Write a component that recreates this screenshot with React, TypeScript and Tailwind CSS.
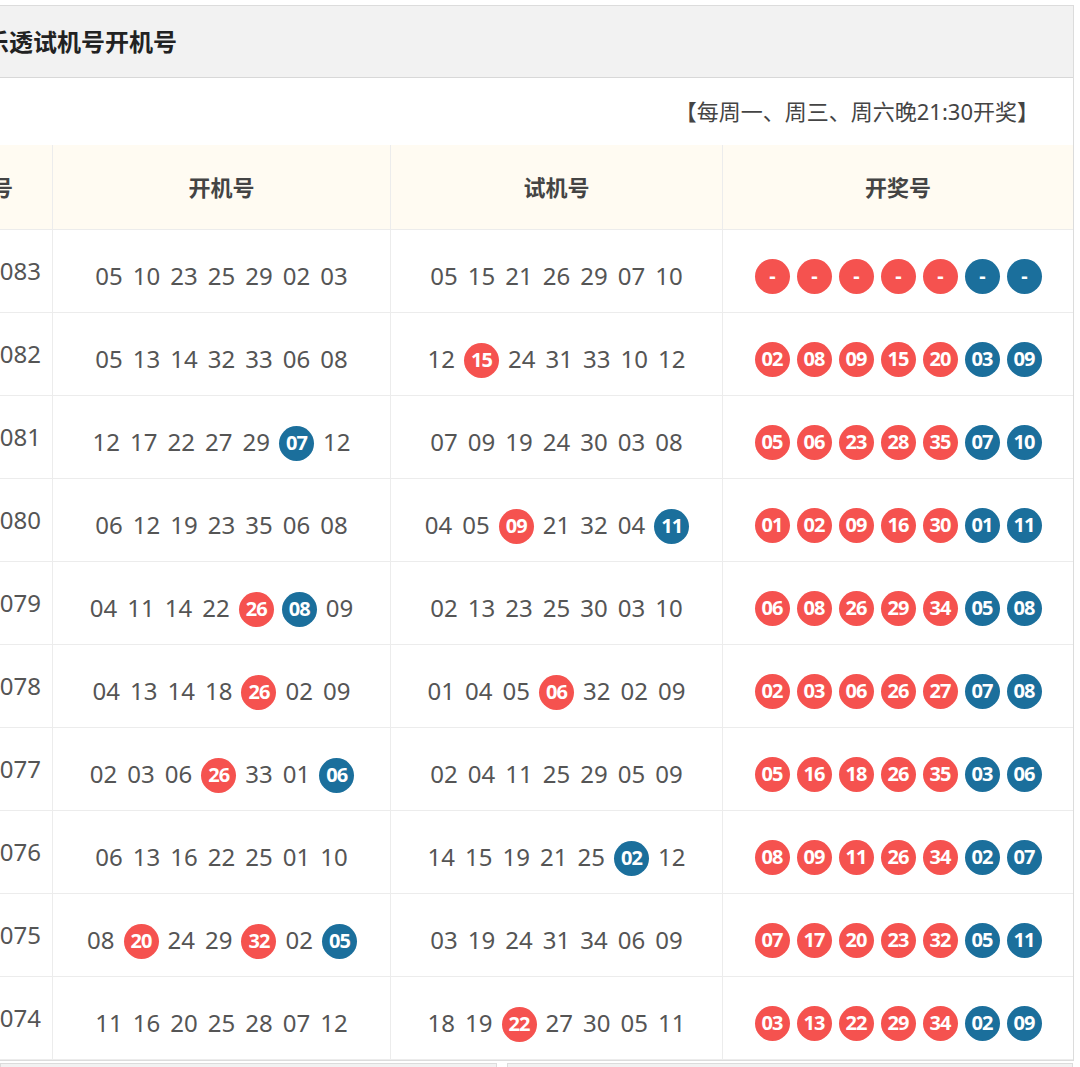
const rows: [string, string, string, string][] = [
  ["2025083", "05 10 23 25 29 02 03", "05 15 21 26 29 07 10", "- - - - - - -"],
  ["2025082", "05 13 14 32 33 06 08", "12 r15 24 31 33 10 12", "02 08 09 15 20 03 09"],
  ["2025081", "12 17 22 27 29 b07 12", "07 09 19 24 30 03 08", "05 06 23 28 35 07 10"],
  ["2025080", "06 12 19 23 35 06 08", "04 05 r09 21 32 04 b11", "01 02 09 16 30 01 11"],
  ["2025079", "04 11 14 22 r26 b08 09", "02 13 23 25 30 03 10", "06 08 26 29 34 05 08"],
  ["2025078", "04 13 14 18 r26 02 09", "01 04 05 r06 32 02 09", "02 03 06 26 27 07 08"],
  ["2025077", "02 03 06 r26 33 01 b06", "02 04 11 25 29 05 09", "05 16 18 26 35 03 06"],
  ["2025076", "06 13 16 22 25 01 10", "14 15 19 21 25 b02 12", "08 09 11 26 34 02 07"],
  ["2025075", "08 r20 24 29 r32 02 b05", "03 19 24 31 34 06 09", "07 17 20 23 32 05 11"],
  ["2025074", "11 16 20 25 28 07 12", "18 19 r22 27 30 05 11", "03 13 22 29 34 02 09"],
];

function Ball({ n, blue }: { n: string; blue?: boolean }) {
  return (
    <span
      className={
        "inline-flex items-center justify-center w-[35px] h-[35px] rounded-full text-white font-bold text-[20px] tracking-[-1px] " +
        (blue ? "bg-[#1b6f9c]" : "bg-[#f5524f]")
      }
    >
      {n}
    </span>
  );
}

function Nums({ s }: { s: string }) {
  return (
    <div className="flex items-center justify-center">
      {s.split(" ").map((t, i) => {
        if (t.startsWith("r")) return <span key={i} className="mx-[4px]"><Ball n={t.slice(1)} /></span>;
        if (t.startsWith("b")) return <span key={i} className="mx-[4px]"><Ball n={t.slice(1)} blue /></span>;
        return <span key={i} className="mx-[5px]">{t}</span>;
      })}
    </div>
  );
}

export default function App() {
  return (
    <div className="w-[1080px] h-[1067px] overflow-hidden bg-white" style={{ fontFamily: '"Noto Sans", "Noto Sans CJK SC", sans-serif' }}>
      <div className="ml-[-98px] w-[1172px] mt-[5px] border border-[#dcdcdc]">
        <div className="h-[72px] bg-[#f2f2f2] border-b border-[#d8d8d8] flex items-center pl-[58px] text-[24px] font-bold text-[#222]">
          大乐透试机号开机号
        </div>
        <div className="h-[67px] flex items-center justify-end pr-[34px] text-[22px] text-[#444]">
          【每周一、周三、周六晚21:30开奖】
        </div>
        <div className="grid grid-cols-[150px_338px_332px_1fr] text-[#555] text-[24px]">
          {["期号", "开机号", "试机号", "开奖号"].map((h, i) => (
            <div key={i} className={"h-[85px] bg-[#fffbf2] flex items-center font-bold text-[22px] text-[#444] border-b border-[#ececec] " + (i === 0 ? "justify-end pr-[39px] " : "justify-center ") + (i < 3 ? "border-r" : "")}>
              {h}
            </div>
          ))}
          {rows.map((r, ri) => (
            <div key={ri} className="contents">
              <div className="h-[83px] border-r border-b border-[#ececec] flex items-start justify-end pt-[23px] pr-[11px]">{r[0]}</div>
              <div className="h-[83px] border-r border-b border-[#ececec] flex items-center justify-center pt-[10px]"><Nums s={r[1]} /></div>
              <div className="h-[83px] border-r border-b border-[#ececec] flex items-center justify-center pt-[10px]"><Nums s={r[2]} /></div>
              <div className="h-[83px] border-b border-[#ececec] flex items-center justify-center gap-[7px] pt-[10px]">
                {r[3].split(" ").map((n, i) => <Ball key={i} n={n} blue={i >= 5} />)}
              </div>
            </div>
          ))}
        </div>
      </div>
      <div className="flex gap-[10px] mt-[2px] w-[1073px]">
        <div className="w-[497px] h-[10px] bg-[#f2f2f2] border border-[#dcdcdc]" />
        <div className="flex-1 h-[10px] bg-[#f2f2f2] border border-[#dcdcdc]" />
      </div>
    </div>
  );
}
